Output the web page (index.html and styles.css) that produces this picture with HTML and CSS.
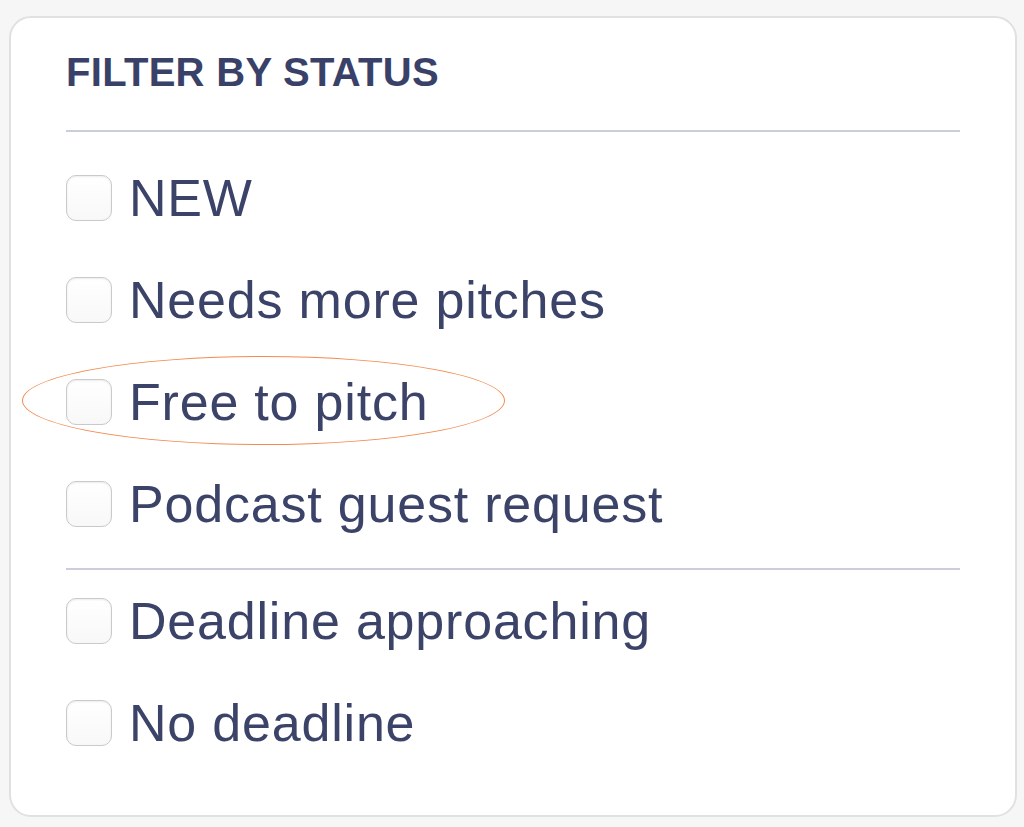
FILE: index.html
```html
<!DOCTYPE html>
<html lang="en">
<head>
    <meta charset="UTF-8">
    <meta name="viewport" content="width=device-width, initial-scale=1.0">
    <title>Filter by status</title>
    <link rel="stylesheet" href="styles.css">
</head>
<body>
    <div class="panel">
        <h2 class="panel-title">FILTER BY STATUS</h2>
        <div class="rule rule-top"></div>

        <label class="option"><input type="checkbox" class="box"><span>NEW</span></label>
        <label class="option"><input type="checkbox" class="box"><span>Needs more pitches</span></label>
        <label class="option marked">
            <input type="checkbox" class="box"><span>Free to pitch</span>
            <span class="ring"></span>
        </label>
        <label class="option"><input type="checkbox" class="box"><span>Podcast guest request</span></label>

        <div class="rule rule-mid"></div>

        <label class="option"><input type="checkbox" class="box"><span>Deadline approaching</span></label>
        <label class="option"><input type="checkbox" class="box"><span>No deadline</span></label>
    </div>
</body>
</html>
```

FILE: styles.css
```css
body {
    margin: 0;
    padding: 0;
    background-color: #f6f6f6;
    font-family: "Liberation Sans", Arial, sans-serif;
}

.panel {
    box-sizing: border-box;
    height: 801px;
    margin: 16px 7px 10px 9px;
    padding: 34px 55px 0 55px;
    background-color: #ffffff;
    border: 2px solid #e1e1e1;
    border-radius: 22px;
}

.panel-title {
    margin: 0;
    font-size: 40px;
    line-height: 40px;
    font-weight: 700;
    letter-spacing: 0.3px;
    color: #3a4168;
}

.rule {
    height: 2px;
    background-color: #cbcddd;
}

.rule-top {
    margin: 38px 0 15px 0;
}

.rule-mid {
    margin: 13px 0 0 0;
}

.option {
    position: relative;
    display: flex;
    align-items: center;
    gap: 17px;
    height: 102px;
    font-size: 52px;
    letter-spacing: 0.8px;
    color: #3c4369;
    cursor: pointer;
}

.box {
    appearance: none;
    -webkit-appearance: none;
    box-sizing: border-box;
    flex: none;
    width: 46px;
    height: 46px;
    margin: 0;
    border: 1.5px solid #cacaca;
    border-radius: 10px;
    background: linear-gradient(#ffffff, #f8f8f8);
    box-shadow: inset 0 1px 2px rgba(0, 0, 0, 0.08);
}

.ring {
    position: absolute;
    left: -44px;
    top: 5px;
    width: 481px;
    height: 87px;
    border: 1px solid #f28b4f;
    border-radius: 50%;
    pointer-events: none;
}
```
